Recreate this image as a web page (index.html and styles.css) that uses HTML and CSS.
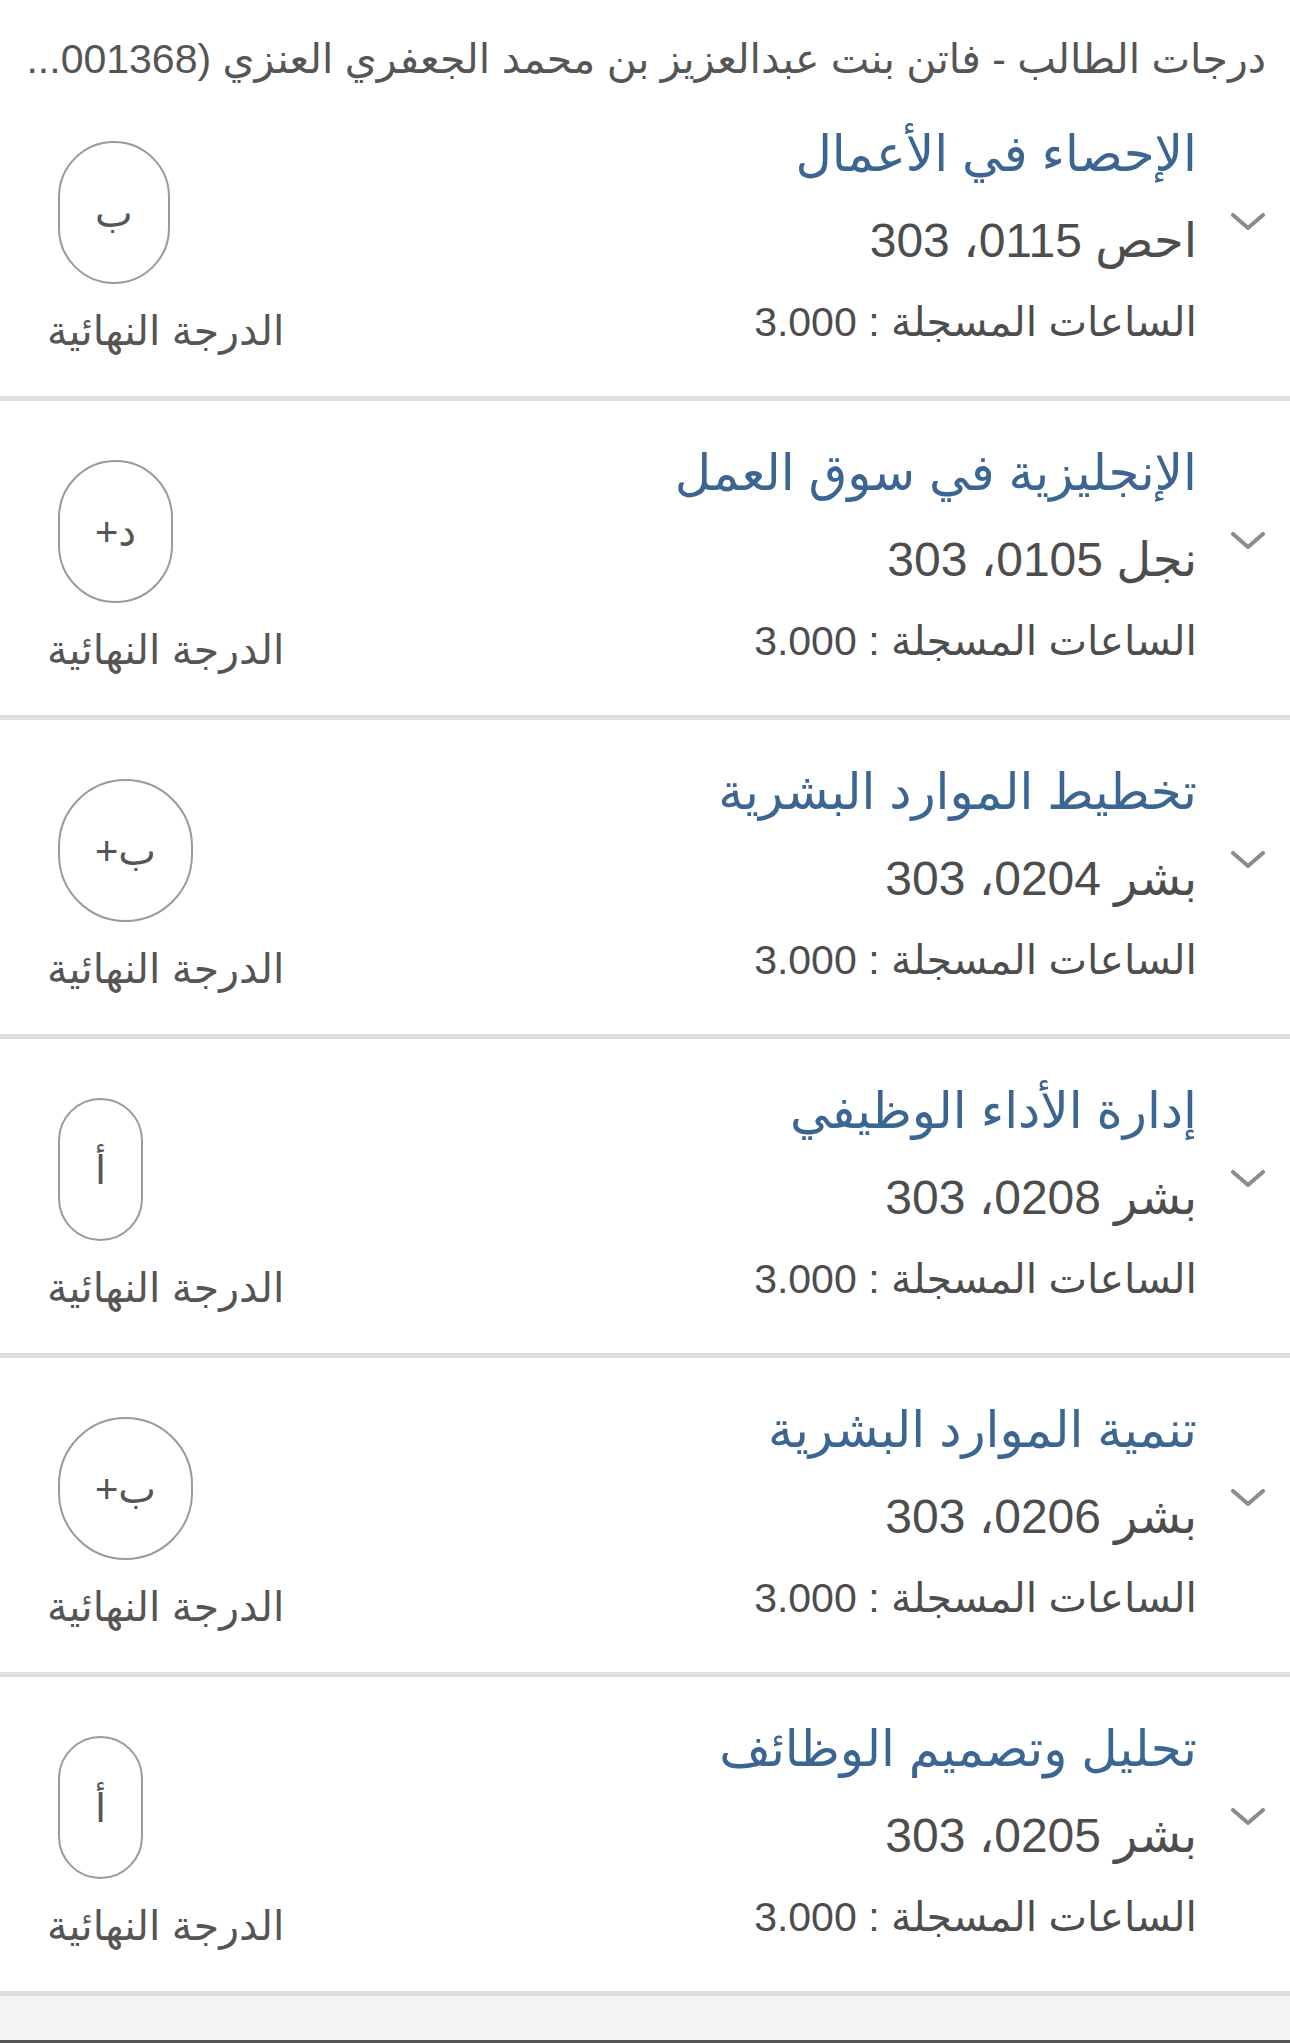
FILE: index.html
```html
<!DOCTYPE html>
<html lang="ar" dir="rtl">
<head>
  <meta charset="UTF-8">
  <title>درجات الطالب</title>
  <link rel="stylesheet" href="styles.css">
</head>
<body>
  <div class="page-title">درجات الطالب - فاتن بنت عبدالعزيز بن محمد الجعفري العنزي (001368...</div>

  <div class="course">
    <div class="chevron"><svg width="34" height="18" viewBox="0 0 34 18"><polyline points="2,2 17,15 32,2" /></svg></div>
    <div class="info">
      <div class="course-name">الإحصاء في الأعمال</div>
      <div class="course-code">احص 0115، 303</div>
      <div class="course-hours">الساعات المسجلة : 3.000</div>
    </div>
    <div class="grade">
      <div class="grade-pill">ب</div>
      <div class="grade-label">الدرجة النهائية</div>
    </div>
  </div>

  <div class="course">
    <div class="chevron"><svg width="34" height="18" viewBox="0 0 34 18"><polyline points="2,2 17,15 32,2" /></svg></div>
    <div class="info">
      <div class="course-name">الإنجليزية في سوق العمل</div>
      <div class="course-code">نجل 0105، 303</div>
      <div class="course-hours">الساعات المسجلة : 3.000</div>
    </div>
    <div class="grade">
      <div class="grade-pill">د+</div>
      <div class="grade-label">الدرجة النهائية</div>
    </div>
  </div>

  <div class="course">
    <div class="chevron"><svg width="34" height="18" viewBox="0 0 34 18"><polyline points="2,2 17,15 32,2" /></svg></div>
    <div class="info">
      <div class="course-name">تخطيط الموارد البشرية</div>
      <div class="course-code">بشر 0204، 303</div>
      <div class="course-hours">الساعات المسجلة : 3.000</div>
    </div>
    <div class="grade">
      <div class="grade-pill">ب+</div>
      <div class="grade-label">الدرجة النهائية</div>
    </div>
  </div>

  <div class="course">
    <div class="chevron"><svg width="34" height="18" viewBox="0 0 34 18"><polyline points="2,2 17,15 32,2" /></svg></div>
    <div class="info">
      <div class="course-name">إدارة الأداء الوظيفي</div>
      <div class="course-code">بشر 0208، 303</div>
      <div class="course-hours">الساعات المسجلة : 3.000</div>
    </div>
    <div class="grade">
      <div class="grade-pill">أ</div>
      <div class="grade-label">الدرجة النهائية</div>
    </div>
  </div>

  <div class="course">
    <div class="chevron"><svg width="34" height="18" viewBox="0 0 34 18"><polyline points="2,2 17,15 32,2" /></svg></div>
    <div class="info">
      <div class="course-name">تنمية الموارد البشرية</div>
      <div class="course-code">بشر 0206، 303</div>
      <div class="course-hours">الساعات المسجلة : 3.000</div>
    </div>
    <div class="grade">
      <div class="grade-pill">ب+</div>
      <div class="grade-label">الدرجة النهائية</div>
    </div>
  </div>

  <div class="course">
    <div class="chevron"><svg width="34" height="18" viewBox="0 0 34 18"><polyline points="2,2 17,15 32,2" /></svg></div>
    <div class="info">
      <div class="course-name">تحليل وتصميم الوظائف</div>
      <div class="course-code">بشر 0205، 303</div>
      <div class="course-hours">الساعات المسجلة : 3.000</div>
    </div>
    <div class="grade">
      <div class="grade-pill">أ</div>
      <div class="grade-label">الدرجة النهائية</div>
    </div>
  </div>

  <div class="footer-space"></div>
  <div class="toolbar"></div>
</body>
</html>
```

FILE: styles.css
```css
body { margin: 0; background: #fff; font-family: "Liberation Sans", "DejaVu Sans", sans-serif; color: #4d4d4d; }
.page-title { height: 82px; box-sizing: border-box; padding: 33px 24px 0 23px; line-height: 52px; font-size: 41px; color: #555; white-space: nowrap; }
.course { display: flex; height: 314px; border-bottom: 5px solid #dedede; box-sizing: content-box; }
.chevron { width: 68px; padding: 131px 25px 0 0; box-sizing: content-box; }
.chevron svg { display: block; margin-left: auto; }
.chevron polyline { fill: none; stroke: #8c8c8c; stroke-width: 4; stroke-linecap: round; stroke-linejoin: round; }
.info { flex: 1; padding-top: 31px; }
.course-name { font-size: 50px; line-height: 82px; color: #3b6593; }
.course-code { font-size: 48px; line-height: 92px; }
.course-hours { font-size: 41px; line-height: 70px; }
.grade { display: flex; flex-direction: column; align-items: flex-end; padding: 59px 0 0 47px; }
.grade-pill { height: 139px; border: 2px solid #9a9a9a; border-radius: 72px; padding: 0 35px; margin-left: 11px; display: flex; align-items: center; font-size: 40px; color: #555; }
.grade-label { font-size: 41px; line-height: 64px; margin-top: 15px; color: #555; }
.footer-space { height: 44px; background: #f3f5f4; }
.toolbar { height: 40px; background: #555; }
```
